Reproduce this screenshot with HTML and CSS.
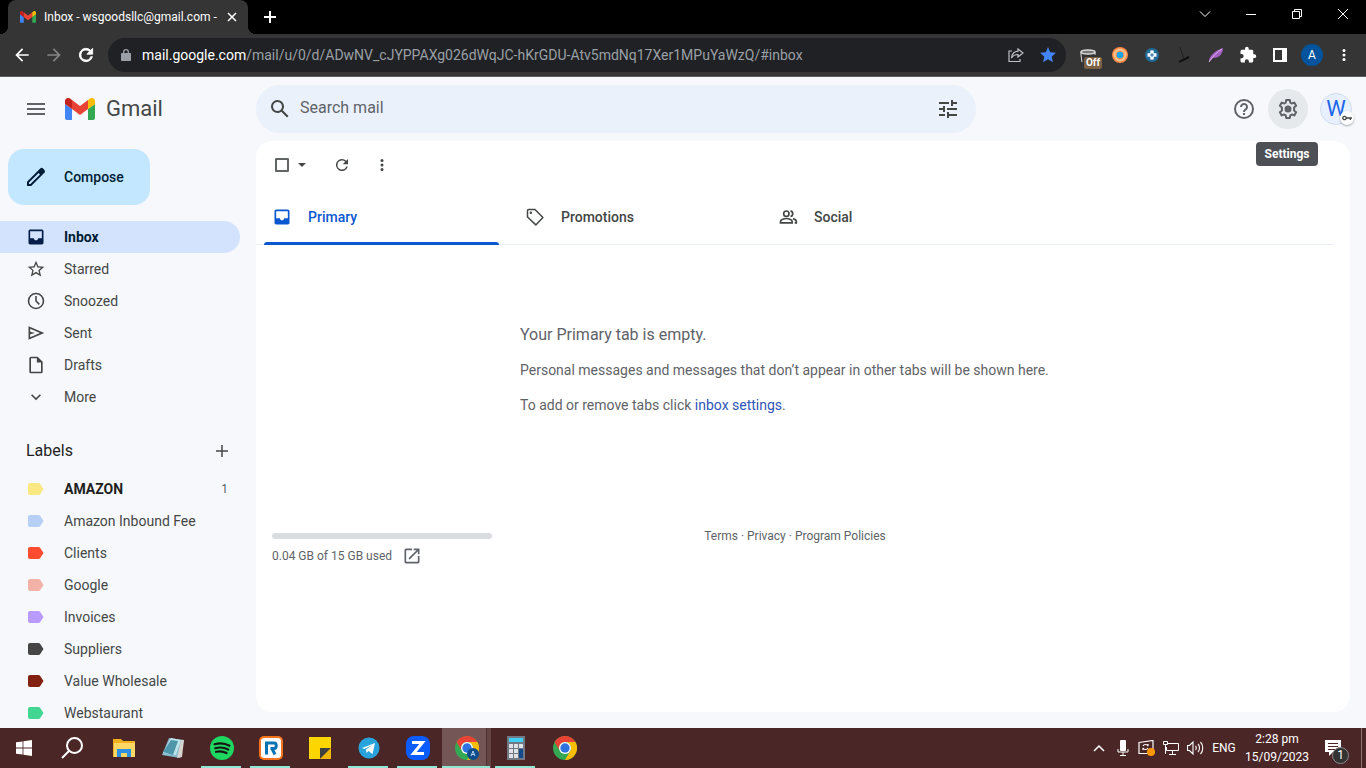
FILE: index.html
```html
<!DOCTYPE html>
<html lang="en">
<head>
<meta charset="utf-8">
<title>Inbox - Gmail</title>
<link rel="stylesheet" href="styles.css">
</head>
<body>
<svg class="defs" aria-hidden="true">
  <symbol id="inbox" viewBox="0 0 24 24"><path d="M19 3H5c-1.1 0-2 .9-2 2v14c0 1.100.9 2 2 2h14c1.100 0 2-.9 2-2V5c0-1.100-.9-2-2-2zm0 10.500h-4.500c0 1.400-1.100 2.500-2.500 2.500s-2.500-1.100-2.500-2.500H5V5h14z"/></symbol>
  <symbol id="gm" viewBox="0 0 30 22"><path fill="#4285f4" d="M2 22h5V11L0 6v14c0 1.100.9 2 2 2z"/><path fill="#34a853" d="M23 22h5c1.100 0 2-.9 2-2V6l-7 5z"/><path fill="#ea4335" d="M7 11V2l8 6 8-6v9l-8 6z"/><path fill="#fbbc04" d="M23 2v9l7-5V3c0-2.500-2.900-4-5-2.500z"/><path fill="#c5221f" d="M0 3v3l7 5V2L5 .5C2.900-1 0 .5 0 3z"/></symbol>
  <symbol id="label" viewBox="0 0 16 12"><path d="M2 0h8.500c.7 0 1.300.3 1.600.8L15.500 6l-3.400 5.200c-.3.500-.9.800-1.600.8H2c-1.100 0-2-.8-2-2V2C0 .8.9 0 2 0z"/></symbol>
  <symbol id="chrome" viewBox="0 0 24 24"><circle cx="12" cy="12" r="12" fill="#34a853"/><path fill="#ea4335" d="M1.600 6A12 12 0 0 1 22.400 6H12a6 6 0 0 0-5.200 9z"/><path fill="#fbbc04" d="M22.400 6A12 12 0 0 1 12 24l5.200-9A6 6 0 0 0 12 6z"/><circle cx="12" cy="12" r="6" fill="#fff"/><circle cx="12" cy="12" r="4.700" fill="#2f73e0"/></symbol>
  <symbol id="refresh" viewBox="0 0 24 24"><path d="M17.650 6.350A8 8 0 1 0 19.730 14h-2.080A6 6 0 1 1 12 6c1.660 0 3.140.69 4.220 1.780L13 11h7V4z"/></symbol>
  <symbol id="dots" viewBox="0 0 24 24"><circle cx="12" cy="6" r="2"/><circle cx="12" cy="12" r="2"/><circle cx="12" cy="18" r="2"/></symbol>
  <symbol id="arrow" viewBox="0 0 24 24"><path d="M20 11H7.800l5.600-5.600L12 4l-8 8 8 8 1.400-1.400L7.800 13H20z"/></symbol>
</svg>

<header class="browser">
  <div class="tabstrip">
    <div class="tab">
      <svg class="favicon"><use href="#gm"/></svg>
      <span class="tab-title">Inbox - wsgoodsllc@gmail.com -</span>
      <button class="tab-close" aria-label="Close tab"><svg width="10" height="10" viewBox="0 0 10 10"><path d="M1 1l8 8M9 1l-8 8" stroke="#fff" stroke-width="1.500"/></svg></button>
    </div>
    <button class="new-tab" aria-label="New tab"><svg width="12" height="12" viewBox="0 0 12 12"><path d="M6 0v12M0 6h12" stroke="#fff" stroke-width="2"/></svg></button>
    <div class="window-buttons">
      <button aria-label="Search tabs"><svg width="12" height="12" viewBox="0 0 12 12"><path d="M1 3.500l5 5 5-5"/></svg></button>
      <button aria-label="Minimize"><svg width="12" height="12" viewBox="0 0 12 12"><path d="M1 6.500h10"/></svg></button>
      <button aria-label="Restore"><svg width="12" height="12" viewBox="0 0 12 12"><path d="M1.500 3.500h7v7h-7zM3.500 3.500v-2h7v7h-2"/></svg></button>
      <button aria-label="Close"><svg width="12" height="12" viewBox="0 0 12 12"><path d="M1 1l10 10M11 1L1 11"/></svg></button>
    </div>
  </div>
  <div class="toolbar">
    <button class="tool" aria-label="Back"><svg class="i20" fill="#fff"><use href="#arrow"/></svg></button>
    <button class="tool" aria-label="Forward"><svg class="i20 flip" fill="#858585"><use href="#arrow"/></svg></button>
    <button class="tool" aria-label="Reload"><svg class="i20" fill="#fff" stroke="#fff"><use href="#refresh"/></svg></button>
    <div class="omnibox">
      <svg width="10" height="12" viewBox="0 0 10 12" fill="#9aa0a6"><path fill-rule="evenodd" d="M1 4h1V3a3 3 0 0 1 6 0v1h1c.6 0 1 .4 1 1v6c0 .6-.4 1-1 1H1c-.6 0-1-.4-1-1V5c0-.6.4-1 1-1zm2.300 0h3.400V3a1.700 1.700 0 0 0-3.400 0z"/></svg>
      <a class="url" href="#inbox"><b>mail.google.com</b>/mail/u/0/d/ADwNV_cJYPPAXg026dWqJC-hKrGDU-Atv5mdNq17Xer1MPuYaWzQ/#inbox</a>
      <button class="tool" aria-label="Share"><svg width="16" height="16" viewBox="0 0 16 16" fill="none" stroke="#bdc1c6" stroke-width="1.200"><path d="M4 4H1v10.500h11V12M10 2l5 4-5 4V7.500C7 7.500 5 8.500 3.500 11 4 7 6 4.500 10 4.200z"/></svg></button>
      <button class="tool" aria-label="Bookmark"><svg width="16" height="16" viewBox="0 0 24 24" fill="#4285f4"><path d="M12 18.500L19.500 23l-2-8.500L24 8.700l-8.700-.7L12 0 8.700 8 0 8.700l6.500 5.800-2 8.500z"/></svg></button>
    </div>
    <button class="tool" aria-label="Extension, off"><svg class="ext-cup" width="16" height="13" viewBox="0 0 16 13"><path d="M1 3h14l-1 10H3z" fill="#333"/><path d="M1 3v3l1 7M15 3v3" stroke="#ddd" fill="none"/><ellipse cx="8" cy="3" rx="7" ry="2" fill="#777" stroke="#ddd" stroke-width="1.500"/></svg><span class="off">Off</span></button>
    <button class="tool" aria-label="Orange extension"><svg width="16" height="16"><circle cx="8" cy="8" r="8" fill="#ff8946"/><circle cx="8" cy="8" r="6.500" fill="#ffc18c"/><circle cx="8" cy="8" r="4.300" fill="#f3904f"/><circle cx="8" cy="8" r="3.300" fill="#19a8ef"/></svg></button>
    <button class="tool" aria-label="Blue extension"><svg width="14" height="14"><circle cx="7" cy="7" r="7" fill="#216b98"/><path d="M7 2.500v9M2.500 7h9" stroke="#fff" stroke-width="3.500"/><path d="M7 5v4M5 7h4" stroke="#216b98"/></svg></button>
    <button class="tool" aria-label="Line extension"><svg width="12" height="16" viewBox="0 0 12 16"><path d="M2 0l4 12" stroke="#222"/><path d="M1 15l10-5" stroke="#111" stroke-width="2"/></svg></button>
    <button class="tool" aria-label="Feather extension"><svg width="16" height="16" viewBox="0 0 16 16"><path d="M1 15C1 9 6 4 15 1c0 5-3 10-10 10z" fill="#a45fc5"/><path d="M1 15C5 9 9 5 14 2" stroke="#e0b7ef" fill="none"/></svg></button>
    <button class="tool" aria-label="Extensions"><svg width="18" height="18" viewBox="0 0 24 24" fill="#fff"><path d="M20.500 11H19V7c0-1.100-.9-2-2-2h-4V3.500a2.500 2.500 0 0 0-5 0V5H4c-1.100 0-2 .9-2 2v3.800h1.500a2.700 2.700 0 0 1 0 5.400H2V20c0 1.100.9 2 2 2h3.800v-1.500a2.700 2.700 0 0 1 5.400 0V22H17c1.100 0 2-.9 2-2v-4h1.500a2.500 2.500 0 0 0 0-5z"/></svg></button>
    <button class="tool" aria-label="Side panel"><svg width="14" height="14"><path d="M1 1h12v12H1z" fill="none" stroke="#fff" stroke-width="2"/><path d="M9 1h4v12H9z" fill="#fff"/></svg></button>
    <button class="tool" aria-label="Profile"><span class="profile">A</span></button>
    <button class="tool" aria-label="Menu"><svg class="i18" fill="#fff"><use href="#dots"/></svg></button>
  </div>
</header>

<div class="gmail">
  <header class="top">
    <div class="brand">
      <button class="icon-btn" aria-label="Main menu"><svg width="18" height="12"><path d="M0 1h18M0 6h18M0 11h18" stroke="#5f6368" stroke-width="2"/></svg></button>
      <a class="logo" href="#inbox"><svg width="30" height="22"><use href="#gm"/></svg><span>Gmail</span></a>
    </div>
    <form class="search">
      <button type="button" class="icon-btn" aria-label="Search"><svg class="i24" viewBox="0 0 24 24" fill="#444746"><path d="M20.500 19l-5.700-5.700a6.500 6.500 0 1 0-1.500 1.500l5.700 5.700zM9.500 14a4.500 4.500 0 1 1 0-9 4.500 4.500 0 0 1 0 9z"/></svg></button>
      <input type="text" placeholder="Search mail" aria-label="Search mail">
      <button type="button" class="icon-btn" aria-label="Search options"><svg class="i24" viewBox="0 0 24 24" fill="#444746"><path d="M3 17v2h6v-2zM3 5v2h10V5zm10 16v-2h8v-2h-8v-2h-2v6zM7 9v2H3v2h4v2h2V9zm14 4v-2H11v2zm-6-4h2V7h4V5h-4V3h-2z"/></svg></button>
    </form>
    <div class="account">
      <button class="icon-btn" aria-label="Support"><svg class="i24" viewBox="0 0 24 24" fill="none" stroke="#5f6368" stroke-width="2"><circle cx="12" cy="12" r="9"/><path d="M9 10a3 3 0 1 1 5.200 2C13 13 12 13.300 12 15M12 16v2"/></svg></button>
      <div class="settings">
        <button class="icon-btn hovered" aria-label="Settings" aria-describedby="tip"><svg class="i24" viewBox="0 0 24 24" fill="none" stroke="#5f6368" stroke-width="2" stroke-linejoin="round"><path d="M10.200 3h3.600l.5 2.600 1.500.9 2.500-.9 1.800 3.100-2 1.800v3l2 1.800-1.800 3.100-2.500-.9-1.500.9-.5 2.600h-3.600l-.5-2.600-1.500-.9-2.500.9-1.800-3.100 2-1.800v-3l-2-1.800 1.800-3.100 2.500.9 1.500-.9z"/><circle cx="12" cy="12" r="2.500" fill="#5f6368"/></svg></button>
        <span class="tooltip" id="tip" role="tooltip">Settings</span>
      </div>
      <button class="avatar" aria-label="Google account">W<span class="key"><svg width="10" height="6" viewBox="0 0 10 6" fill="none" stroke="#444746" stroke-width="1.300"><circle cx="2.500" cy="3" r="1.700"/><path d="M4.200 3H10M8.300 3v2"/></svg></span></button>
    </div>
  </header>

  <div class="body">
    <aside class="sidebar">
      <button class="compose"><svg class="i24" viewBox="0 0 24 24" fill="#001d35"><path d="M20.400 4.900l-1.300-1.300a2 2 0 0 0-2.900 0L3 16.800V21h4.200L20.400 7.800c.8-.8.8-2.100 0-2.900zM6.400 19H5v-1.400L14.600 8 16 9.400z"/></svg>Compose</button>
      <nav class="folders">
        <a class="row current" href="#inbox"><svg class="i20"><use href="#inbox"/></svg>Inbox</a>
        <a class="row" href="#starred"><svg class="i20" viewBox="0 0 24 24"><path d="M22 9.200l-7.200-.6L12 2 9.200 8.600 2 9.200l5.500 4.700L5.800 21l6.200-3.700 6.200 3.700-1.600-7zM12 15.400l-3.800 2.300 1-4.300-3.300-2.900 4.400-.4L12 6.100l1.700 4 4.400.4-3.300 2.900 1 4.300z"/></svg>Starred</a>
        <a class="row" href="#snoozed"><svg class="i20" viewBox="0 0 24 24" fill="none" stroke="#444746" stroke-width="1.900"><circle cx="12" cy="12" r="9"/><path d="M12 6v6l4 4"/></svg>Snoozed</a>
        <a class="row" href="#sent"><svg class="i20" viewBox="0 0 24 24"><path d="M3 20V4l19 8zm2-3l11.800-5L5 7v3.500l6 1.500-6 1.500z"/></svg>Sent</a>
        <a class="row" href="#drafts"><svg class="i20" viewBox="0 0 24 24"><path d="M14 2H6c-1.100 0-2 .9-2 2v16c0 1.100.9 2 2 2h12c1.100 0 2-.9 2-2V8zM6 4h7v5h5v11H6z"/></svg>Drafts</a>
        <a class="row" href="#more"><svg class="i20" viewBox="0 0 24 24"><path d="M12 16l-6-6 1.400-1.400 4.600 4.600 4.600-4.600L18 10z"/></svg>More</a>
      </nav>
      <div class="labels-head"><h2>Labels</h2><button class="icon-btn small" aria-label="Create new label"><svg width="12" height="12"><path d="M6 0v12M0 6h12" stroke="#444746" stroke-width="1.500"/></svg></button></div>
      <nav class="labels">
        <a class="row unread" href="#l1"><svg class="tag yellow"><use href="#label"/></svg>AMAZON<span class="count">1</span></a>
        <a class="row" href="#l2"><svg class="tag sky"><use href="#label"/></svg>Amazon Inbound Fee</a>
        <a class="row" href="#l3"><svg class="tag red"><use href="#label"/></svg>Clients</a>
        <a class="row" href="#l4"><svg class="tag pink"><use href="#label"/></svg>Google</a>
        <a class="row" href="#l5"><svg class="tag violet"><use href="#label"/></svg>Invoices</a>
        <a class="row" href="#l6"><svg class="tag grey"><use href="#label"/></svg>Suppliers</a>
        <a class="row" href="#l7"><svg class="tag maroon"><use href="#label"/></svg>Value Wholesale</a>
        <a class="row" href="#l8"><svg class="tag green"><use href="#label"/></svg>Webstaurant</a>
      </nav>
    </aside>

    <main class="panel">
      <div class="actions">
        <input type="checkbox" aria-label="Select all">
        <button class="caret" aria-label="Select options"><svg width="8" height="4"><path d="M0 0h8L4 4z" fill="#444746"/></svg></button>
        <button class="icon-btn" aria-label="Refresh"><svg class="i18" fill="#444746"><use href="#refresh"/></svg></button>
        <button class="icon-btn" aria-label="More"><svg class="i18" fill="#444746"><use href="#dots"/></svg></button>
      </div>
      <div class="categories" role="tablist">
        <button class="category active" role="tab" aria-selected="true"><svg class="i20"><use href="#inbox"/></svg>Primary</button>
        <button class="category" role="tab" aria-selected="false"><svg class="i20" viewBox="0 0 24 24" fill="none" stroke="#444746" stroke-width="1.800" stroke-linejoin="round"><path d="M3 4.500C3 3.500 3.500 3 4.500 3H12l9.500 9.500-8.500 9L3 12z"/><circle cx="7" cy="7" r=".6" fill="#444746"/></svg>Promotions</button>
        <button class="category" role="tab" aria-selected="false"><svg class="i20" viewBox="0 0 24 24" fill="none" stroke="#444746" stroke-width="2"><circle cx="10" cy="8" r="3.200"/><path d="M3 19v-1.500c0-2.500 5-3.700 7-3.700s7 1.200 7 3.700V19zM15 4.600a3.500 3.500 0 0 1 0 6.800M18 14c2.500.8 4 1.800 4 3.500V19h-2"/></svg>Social</button>
      </div>
      <section class="empty">
        <p class="lead">Your Primary tab is empty.</p>
        <p>Personal messages and messages that don’t appear in other tabs will be shown here.</p>
        <p>To add or remove tabs click <a href="#settings">inbox settings</a>.</p>
      </section>
      <footer class="foot">
        <div class="storage">
          <div class="meter"></div>
          <div class="used">0.04 GB of 15 GB used<a href="#storage" aria-label="Manage storage"><svg class="i20" viewBox="0 0 24 24" fill="#5f6368"><path d="M19 19H5V5h7V3H5a2 2 0 0 0-2 2v14c0 1.100.9 2 2 2h14c1.100 0 2-.9 2-2v-7h-2zM14 3v2h3.600l-9.800 9.800 1.400 1.400L19 6.400V10h2V3z"/></svg></a></div>
        </div>
        <div class="legal"><a href="#terms">Terms</a> · <a href="#privacy">Privacy</a> · <a href="#policies">Program Policies</a></div>
      </footer>
    </main>
  </div>
</div>

<footer class="taskbar">
  <button class="sys" aria-label="Start"><svg width="16" height="16" fill="#fff"><path d="M0 2.300l6.600-.9v6.200H0zM7.400 1.300L16 0v7.600H7.400zM0 8.400h6.600v6.200L0 13.700zM7.400 8.400H16V16l-8.600-1.200z"/></svg></button>
  <button class="sys find" aria-label="Search"><svg width="22" height="22" viewBox="0 0 22 22" fill="none" stroke="#fff" stroke-width="2"><circle cx="13.500" cy="8.500" r="7.500"/><path d="M8 14l-7 7"/></svg></button>
  <button class="app" aria-label="File Explorer"><svg width="22" height="18"><path d="M0 0h8l2 2h12v16H0z" fill="#f2b01f"/><path d="M1 4h21v14H1z" fill="#ffd764"/><path d="M4 18v-8h14v8h-4v-4H8v4z" fill="#2f8fe0"/></svg></button>
  <button class="app" aria-label="Notepad"><svg width="24" height="22"><path d="M8 1l15 2-4 18-18-3z" fill="#86bccb"/><path d="M10 1l10 2-5 15-13-2z" fill="#bfe3ea"/><path d="M2 15L10 3l7 1-5 14z" fill="#4e97ab"/><path d="M20 3h3l-2 17-5 1z" fill="#d8d4cf"/></svg></button>
  <button class="app open" aria-label="Spotify"><svg width="24" height="24"><circle cx="12" cy="12" r="12" fill="#1ed760"/><path d="M4.500 8.200c5-1.400 10.500-1 15 1.500M5.200 12.200c4.500-1.200 9-.8 13 1.300M6 15.800c3.700-.9 7.300-.6 10.500 1.200" fill="none" stroke="#191414" stroke-width="2.200" stroke-linecap="round"/></svg></button>
  <button class="app open" aria-label="RingCentral"><svg width="24" height="24"><rect width="24" height="24" rx="5" fill="#f5731b"/><rect x="2" y="2" width="20" height="20" rx="3" fill="#fff"/><path d="M7.500 18.500V7H15c3 0 3 5.500 0 5.500h-3.500M13 12.500l3 6" fill="none" stroke="#0873b3" stroke-width="3"/></svg></button>
  <button class="app" aria-label="Sticky Notes"><svg width="22" height="22"><path d="M0 0h22v11L11 22H0z" fill="#fdd500"/><path d="M11 11h11L11 22z" fill="#414141"/><path d="M22 11v11H11z" fill="#f0b800"/></svg></button>
  <button class="app open" aria-label="Telegram"><svg width="22" height="22"><circle cx="11" cy="11" r="10.500" fill="#29a3dc"/><path d="M4 11l13-5-2.500 11-4-3-2 2-.5-3.500 6-4.500-7.500 4z" fill="#fff"/></svg></button>
  <button class="app open" aria-label="Zoom"><svg width="24" height="24"><rect width="24" height="24" rx="8" fill="#0b5cff"/><path d="M6 6.500h10.500L7.500 17.500H18" fill="none" stroke="#fff" stroke-width="3"/></svg></button>
  <button class="app open focused" aria-label="Gmail in Chrome"><svg width="24" height="24"><use href="#chrome"/><circle cx="18" cy="18" r="6" fill="#0b4e8b"/><path d="M16 20l2-5 2 5M17 18.500h2" fill="none" stroke="#b9d4ef"/></svg></button>
  <button class="app open" aria-label="Calculator"><svg width="18" height="24"><path d="M0 0h18v24H0z" fill="#737983"/><path d="M2 2h14v4H2z" fill="#40d0f5"/><path d="M2 8h4v4H2zM7 8h4v4H7zM12 8h4v4h-4zM2 13h4v4H2zM7 13h4v4H7zM2 18h4v4H2zM7 18h4v4H7z" fill="#dfe3e8"/><path d="M12 13h4v9h-4z" fill="#124a8c"/></svg></button>
  <button class="app" aria-label="Chrome"><svg width="24" height="24"><use href="#chrome"/></svg></button>
  <div class="tray">
    <button aria-label="Hidden icons"><svg width="12" height="7"><path d="M1 6l5-5 5 5" fill="none" stroke="#fff" stroke-width="1.500"/></svg></button>
    <button aria-label="Microphone"><svg width="12" height="16"><rect x="3" width="6" height="11" rx="1" fill="#fff"/><path d="M1 9v3h10V9M6 12v3M3 15.500h6" fill="none" stroke="#fff"/></svg></button>
    <button aria-label="Update"><svg width="18" height="17"><path d="M1 2.500l14-2v13H1zM5 6c1-2 4-2 5 0V4M10 8c-1 2-4 2-5 0v2" fill="none" stroke="#fff" stroke-width="1.200"/><circle cx="13" cy="12" r="4" fill="#ff9800"/></svg></button>
    <button aria-label="Network"><svg width="16" height="14"><path d="M5 2.500h10.500v7H3.500V6M9.500 10v3M6 13.500h7M.5.500h4v3h-4zM2.500 4v9" fill="none" stroke="#fff"/></svg></button>
    <button aria-label="Volume"><svg width="17" height="14"><path d="M.5 4.500h2L6 1v12L2.500 9.500h-2zM8.500 5c1 1 1 3 0 4M11 3c2 2 2 6 0 8M13.500 1c3 3 3 9 0 12" fill="none" stroke="#fff" stroke-width="1.100"/></svg></button>
    <button class="lang">ENG</button>
    <button class="clock"><span>2:28 pm</span><span>15/09/2023</span></button>
    <button class="notes" aria-label="1 new notification"><svg width="17" height="16"><path d="M0 0h16v12H8l-4 4v-4H0z" fill="#fff"/><path d="M3 3.500h10M3 6.500h10M3 9.500h7" stroke="#4b2626"/></svg><span class="badge">1</span></button>
    <span class="peek"></span>
  </div>
</footer>
</body>
</html>
```
FILE: styles.css
```css
* { box-sizing: border-box; }
body { margin: 0; height: 100vh; display: flex; flex-direction: column; overflow: hidden; background: #f6f8fc; color: #444746; font: 14px/20px Roboto, sans-serif; }
button { display: flex; align-items: center; justify-content: center; padding: 0; border: 0; background: none; color: inherit; font: inherit; }
a { color: inherit; text-decoration: none; }
h2, p { margin: 0; font-weight: 400; }
svg { flex: none; }
.defs { position: absolute; width: 0; height: 0; }
.i18 { width: 18px; height: 18px; }
.i20 { width: 20px; height: 20px; }
.i24 { width: 24px; height: 24px; }
.flip { transform: rotate(180deg); }

/* Browser chrome */
.browser, .taskbar { flex: none; }
.tabstrip { display: flex; height: 34px; padding-left: 8px; background: #000; }
.tab { position: relative; display: flex; align-items: center; width: 240px; padding: 0 10px 0 12px; border-radius: 8px 8px 0 0; background: #353535; color: #fff; font-size: 12px; }
.tab::before, .tab::after { content: ""; position: absolute; bottom: 0; width: 8px; height: 8px; }
.tab::before { left: -8px; background: radial-gradient(circle at 0 0, #000 8px, #353535 8px); }
.tab::after { right: -8px; background: radial-gradient(circle at 100% 0, #000 8px, #353535 8px); }
.favicon { width: 16px; height: 12px; margin-right: 8px; }
.tab-title { flex: 1; min-width: 0; overflow: hidden; white-space: nowrap; }
.tab-close { width: 12px; height: 12px; margin-left: 6px; }
.new-tab { width: 28px; margin-left: 8px; }
.window-buttons { display: flex; margin-left: auto; padding-bottom: 6px; }
.window-buttons button { width: 46px; }
.window-buttons svg { fill: none; stroke: #fff; }
.toolbar { display: flex; align-items: center; height: 43px; padding: 0 6px; border-bottom: 1px solid #5c5c5c; background: #353535; }
.tool { position: relative; flex: none; width: 32px; height: 32px; }
.omnibox { display: flex; flex: 1; align-items: center; min-width: 0; height: 34px; margin: 0 6px; padding: 0 2px 0 13px; border-radius: 17px; background: #202124; }
.url { flex: 1; min-width: 0; overflow: hidden; margin-left: 11px; color: #9aa0a6; font-size: 14px; white-space: nowrap; }
.url b { color: #fff; font-weight: 400; }
.off { position: absolute; right: 2px; bottom: 2px; padding: 0 2px; border-radius: 2px; background: #7d6144; color: #fff; font-size: 10px; font-weight: 700; line-height: 12px; }
.profile { width: 22px; height: 22px; border-radius: 50%; background: #00539c; color: #fff; font-size: 12px; line-height: 22px; }

/* Gmail header */
.gmail { display: flex; flex: 1; flex-direction: column; min-height: 0; }
.top { display: flex; flex: none; align-items: center; height: 64px; padding-right: 14px; }
.brand { display: flex; flex: none; align-items: center; width: 256px; padding-left: 16px; }
.icon-btn { flex: none; width: 40px; height: 40px; border-radius: 50%; }
.logo { display: flex; align-items: center; gap: 11px; margin-left: 9px; color: #444746; font-size: 22px; }
.search { display: flex; flex: 0 1 720px; align-items: center; min-width: 0; height: 48px; padding: 0 8px 0 4px; border-radius: 24px; background: #eaf1fb; }
.search input { flex: 1; min-width: 0; padding: 0 0 2px; border: 0; outline: 0; background: none; color: #444746; font: 16px/24px Roboto, sans-serif; }
.search input::placeholder { color: #5f6368; opacity: 1; }
.account { display: flex; align-items: center; gap: 4px; margin-left: auto; }
.settings { position: relative; }
.hovered { background: #e6e9eb; }
.tooltip { position: absolute; top: 53px; right: -10px; z-index: 1; width: 62px; border-radius: 4px; background: #4d5156; color: #fff; font-size: 12px; font-weight: 700; line-height: 24px; text-align: center; }
.avatar { position: relative; width: 32px; height: 32px; margin-left: 8px; border: 1px solid #d3dded; border-radius: 50%; background: #e8f0fe; color: #1a67e8; font-size: 22px; }
.key { position: absolute; right: -3px; bottom: -1px; display: flex; align-items: center; justify-content: center; width: 14px; height: 14px; border-radius: 50%; background: #fff; box-shadow: 0 1px 2px #0005; }

/* Sidebar */
.body { display: flex; flex: 1; min-height: 0; }
.sidebar { flex: none; width: 256px; padding: 8px 16px 0 0; overflow: hidden; }
.compose { justify-content: flex-start; gap: 16px; min-width: 142px; height: 56px; margin: 0 0 16px 8px; padding: 0 16px; border-radius: 16px; background: #c2e7ff; color: #001d35; font-weight: 500; }
.row { display: flex; align-items: center; height: 32px; padding: 0 12px 0 26px; border-radius: 0 16px 16px 0; }
.row svg { margin-right: 18px; fill: #444746; }
.row svg[fill="none"] { fill: none; }
.row.current { background: #d3e3fd; color: #001d35; font-weight: 700; }
.row.current svg { fill: #041e49; }
.row.unread { color: #1f1f1f; font-weight: 700; }
.count { margin-left: auto; color: #5f6368; font-size: 12px; font-weight: 400; }
.labels-head { display: flex; align-items: center; justify-content: space-between; height: 44px; margin-top: 16px; padding: 0 8px 0 26px; }
.labels-head h2 { color: #1f1f1f; font-size: 16px; }
.icon-btn.small { width: 20px; height: 20px; }
.row svg.tag { width: 16px; height: 12px; margin: 0 20px 0 2px; }
.row svg.yellow { fill: #fce883; }
.row svg.sky { fill: #b6cff5; }
.row svg.red { fill: #fb4c2f; }
.row svg.pink { fill: #f2b2a8; }
.row svg.violet { fill: #b99aff; }
.row svg.grey { fill: #464646; }
.row svg.maroon { fill: #822111; }
.row svg.green { fill: #43d692; }

/* Message panel */
.panel { flex: 1; min-width: 0; margin: 0 16px 16px 0; padding-right: 16px; border-radius: 16px; background: #fff; }
.actions { display: flex; align-items: center; height: 48px; padding-left: 19px; }
.actions input { appearance: none; width: 14px; height: 14px; margin: 0; border: 2px solid #626566; border-radius: 1px; }
.caret { width: 24px; height: 20px; margin: 0 8px 0 1px; }
.categories { display: flex; height: 56px; border-bottom: 1px solid #e9eef6; }
.category { position: relative; flex: 0 1 253px; justify-content: flex-start; gap: 16px; padding: 0 16px; font-weight: 500; }
.category.active { color: #0b57d0; }
.category.active svg { fill: #0b57d0; }
.category.active::after { content: ""; position: absolute; right: 10px; bottom: -1px; left: 8px; height: 3px; border-radius: 3px 3px 0 0; background: #0b57d0; }
.empty { display: grid; gap: 15px; max-width: 550px; margin: 80px auto 0; color: #5f6368; }
.empty .lead { font-size: 16px; }
.empty a { color: #2f55b8; }
.foot { display: grid; grid-template-columns: 1fr auto 1fr; padding: 0 16px; margin-top: 111px; color: #5f6368; font-size: 12px; }
.storage { padding-top: 7px; }
.meter { width: 220px; height: 6px; border-radius: 3px; background: #dadce0; }
.used { display: flex; align-items: center; gap: 10px; margin-top: 7px; }
.used a { display: flex; }

/* Windows taskbar */
.taskbar { display: flex; height: 40px; background: #4b2626; color: #fff; font-size: 12px; }
.sys { width: 48px; }
.find { margin-right: 3px; }
.app { position: relative; width: 49px; }
.app.open::after { content: ""; position: absolute; right: 5px; bottom: 0; left: 4px; height: 2px; background: #90e8d4; }
.app.focused { background: linear-gradient(90deg, #755656 44px, #4b3030 44px 45px, #654444 45px); }
.app.focused::after { right: 1px; left: 0; }
.tray { display: flex; margin-left: auto; }
.tray button { width: 24px; }
.tray .lang { width: 34px; }
.tray .clock { flex-direction: column; width: 72px; line-height: 18px; }
.tray .notes { position: relative; justify-content: flex-start; width: 48px; padding-left: 12px; }
.badge { position: absolute; right: 12px; bottom: 4px; width: 17px; height: 17px; border: 1px solid #8b8b8b; border-radius: 50%; background: #333; line-height: 15px; }
.peek { width: 5px; border-left: 1px solid #8a7070; }
```
